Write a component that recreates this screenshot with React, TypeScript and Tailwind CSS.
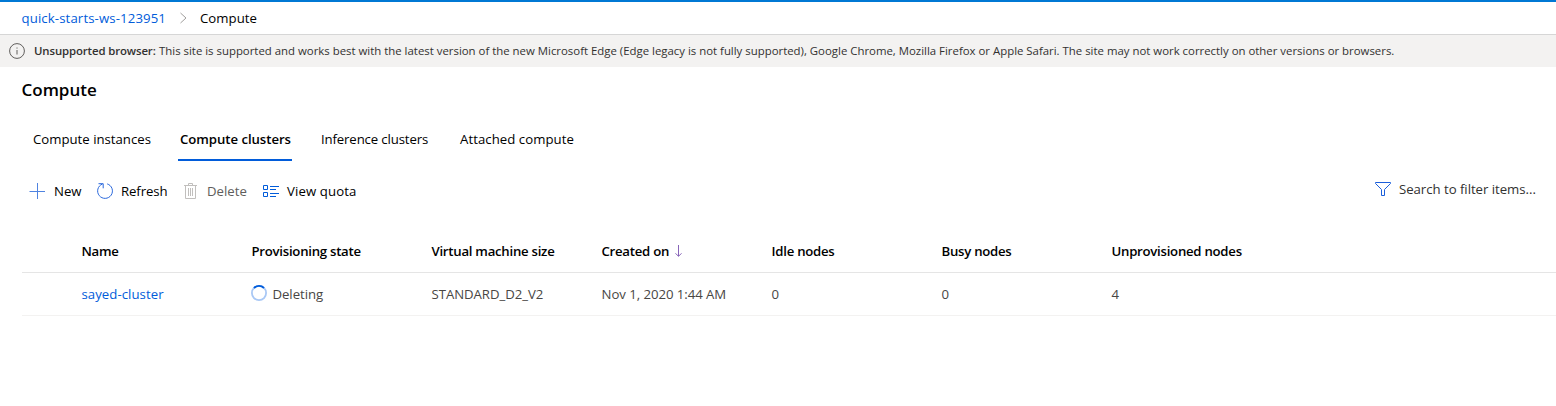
import React from "react";

const tabs = [
  { label: "Compute instances", box: "w-[147px]", text: "" },
  { label: "Compute clusters", box: "w-[141px]", text: "font-semibold tracking-[-0.05px]", active: true },
  { label: "Inference clusters", box: "w-[139px]", text: "tracking-[-0.13px]" },
  { label: "Attached compute", box: "w-[130px]", text: "tracking-[0.05px]" },
];

const columns = [
  { label: "Name", value: "sayed-cluster", width: "w-[170px]" },
  { label: "Provisioning state", value: "Deleting", width: "w-[180px]" },
  { label: "Virtual machine size", value: "STANDARD_D2_V2", width: "w-[170px]" },
  { label: "Created on", value: "Nov 1, 2020 1:44 AM", width: "w-[170px]" },
  { label: "Idle nodes", value: "0", width: "w-[170px]" },
  { label: "Busy nodes", value: "0", width: "w-[170px]" },
  { label: "Unprovisioned nodes", value: "4", width: "w-[170px]" },
];

function Spinner() {
  return (
    <svg className="-ml-[0.5px] mr-[5.5px] -mt-[3px] h-4 w-4 shrink-0" viewBox="0 0 16 16" fill="none" strokeWidth="1.8">
      <circle cx="8" cy="8" r="7.1" stroke="#a9c8f5" />
      <path d="M3 3A7.1 7.1 0 0 1 13 3" stroke="#015cda" />
    </svg>
  );
}

export default function App() {
  return (
    <div className="flex h-[406px] w-full flex-col overflow-hidden whitespace-nowrap border-t-2 border-[#0078d4] bg-white font-['Open_Sans',sans-serif] text-[13.2px] leading-5 text-black">
      <nav className="flex h-[33px] shrink-0 items-center border-b border-[#d6d6d6] pl-[21.5px]">
        <a className="w-[157.5px] tracking-[0.12px] text-[#015cda]">quick-starts-ws-123951</a>
        <svg className="h-3 w-[21px] shrink-0" viewBox="0 0 21 12" fill="none" stroke="#a19f9d">
          <path d="M1.5 1L7 6L1.5 11" />
        </svg>
        <span className="tracking-[0.05px]">Compute</span>
      </nav>

      <div className="flex h-8 shrink-0 items-center bg-[#f3f2f1] pl-[9px] text-[11.4px] text-[#323130]">
        <svg className="mr-[9px] h-4 w-4 shrink-0" viewBox="0 0 16 16" fill="none" stroke="#605e5c">
          <circle cx="8" cy="8" r="7.4" />
          <path d="M8 7v4.5M8 4.5v1.1" />
        </svg>
        <span className="w-[125px] font-semibold tracking-[-0.12px]">Unsupported browser:</span>
        <span>
          This site is supported and works best with the latest version of the new Microsoft Edge (Edge legacy is not
          fully supported), Google Chrome, Mozilla Firefox or Apple Safari. The site may not work correctly on other
          versions or browsers.
        </span>
      </div>

      <h1 className="mt-[11px] shrink-0 pl-[21.5px] text-[17px] font-semibold leading-6">Compute</h1>

      <div className="mt-4 flex h-[43px] shrink-0 pl-[33px]">
        {tabs.map((t) => (
          <div key={t.label} className={t.box}>
            <div
              className={
                t.active
                  ? "-ml-0.5 flex h-[43px] w-[114px] items-center border-b-2 border-[#015cda] pl-0.5"
                  : "flex h-[43px] items-center border-b-2 border-transparent"
              }
            >
              <span className={t.text}>{t.label}</span>
            </div>
          </div>
        ))}
      </div>

      <div className="mt-[15px] flex h-[29px] shrink-0 items-center pl-[29px]">
        <svg className="mr-[9px] h-4 w-4 shrink-0" viewBox="0 0 16 16" fill="none" stroke="#4f83e0">
          <path d="M8.5 0v16M.5 8.5h16" />
        </svg>
        <span className="w-[43px]">New</span>
        <svg className="mr-2 h-4 w-4 shrink-0" viewBox="0 0 16 16" fill="none" stroke="#2a68dc">
          <path d="M10.2 .9A7.4 7.4 0 1 1 5.3 1.1M1.5 .7H6.2V5.3" />
        </svg>
        <span className="w-[62px] tracking-[-0.1px]">Refresh</span>
        <svg className="mr-2 h-4 w-4 shrink-0" viewBox="0 0 16 16" fill="none" stroke="#c1bfbd">
          <path d="M1 2.5h13M5.5 2.5v-2h4v2M2.5 2.5v13h10v-13M5.5 5v8M7.5 5v8M9.5 5v8" />
        </svg>
        <span className="w-14 text-[#605e5c]">Delete</span>
        <svg className="mr-2 h-4 w-4 shrink-0" viewBox="0 0 16 16" fill="none" stroke="#015cda">
          <path d="M.5 2.5h4v4h-4zM.5 9.5h4v4h-4zM7 3.5h9M7 6.5h6M7 10.5h9M7 13.5h6" />
        </svg>
        <span className="tracking-[0.12px]">View quota</span>
        <div className="mb-1 ml-auto flex w-[181px] items-center text-[#323130]">
          <svg className="mr-2 h-4 w-4 shrink-0" viewBox="0 0 16 16" fill="none" stroke="#1c5fdb">
            <path d="M.5 1.5h15v1L9.5 8.5v6h-3v-6L.5 2.5z" />
          </svg>
          <span className="tracking-[-0.03px]">Search to filter items...</span>
        </div>
      </div>

      <div className="ml-[21.5px] mt-6 shrink-0">
        <div className="flex h-[44px] items-center border-b border-[#e5e5e5] pl-[60px] font-semibold tracking-[-0.26px]">
          {columns.map((c) => (
            <div key={c.label} className={`flex items-center ${c.width}`}>
              {c.label}
              {c.label === "Created on" && (
                <svg className="ml-1 h-3 w-3" viewBox="0 0 12 12" fill="none" stroke="#8764b8">
                  <path d="M5.5 0v11M2.5 8.3L5.5 11.3L8.5 8.3" />
                </svg>
              )}
            </div>
          ))}
        </div>
        <div className="flex h-[43px] items-center border-b border-[#f3f2f1] pl-[60px] text-[#484644]">
          {columns.map((c) => (
            <div key={c.label} className={`flex items-center ${c.width}`}>
              {c.label === "Provisioning state" && <Spinner />}
              <span className={c.label === "Name" ? "tracking-[0.05px] text-[#015cda]" : "tracking-[-0.05px]"}>
                {c.value}
              </span>
            </div>
          ))}
        </div>
      </div>
    </div>
  );
}
